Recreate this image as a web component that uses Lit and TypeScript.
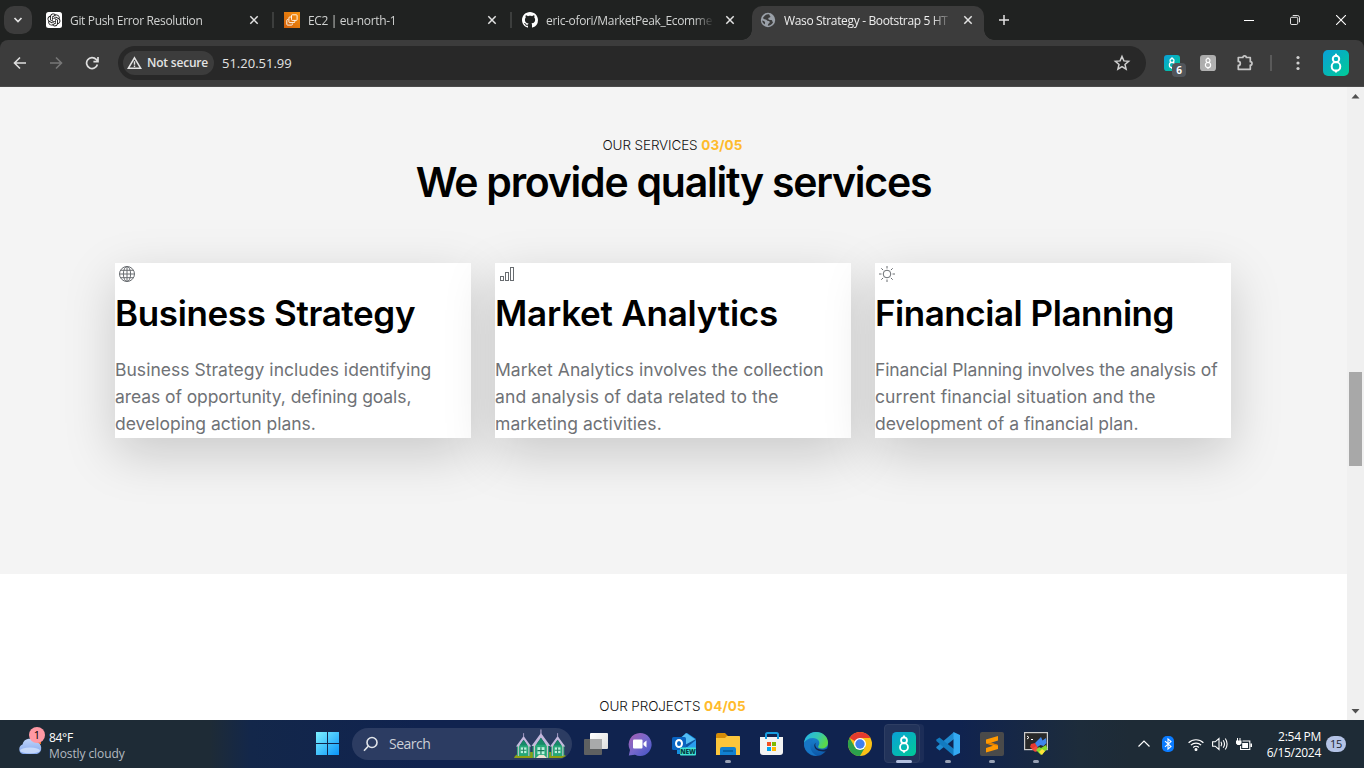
import { LitElement, html, css, svg } from "lit";
import { customElement } from "lit/decorators.js";
import { styleMap } from "lit/directives/style-map.js";

const eight = (stroke: number) => svg`
  <g fill="none" stroke="#fff" stroke-width=${stroke} stroke-linecap="round">
    <path d="M13 4.400v1.600M13 20.600v1.200"/><circle cx="13" cy="9" r="3.200"/><circle cx="13" cy="16.400" r="4.300"/>
  </g>`;

const eightTile = (size: number, id: string, gray = false, stroke = 2) => html`
  <svg width=${size} height=${size} viewBox="0 0 26 26">
    <defs><linearGradient id=${id} x1="0" y1="0" x2="1" y2="1">
      <stop offset="0" stop-color=${gray ? "#a9a9a9" : "#0a9fd8"}/><stop offset="1" stop-color=${gray ? "#b5b5b5" : "#00cc96"}/>
    </linearGradient></defs>
    <rect width="26" height="26" rx="5" fill="url(#${id})"/>${eight(stroke)}
  </svg>`;

const openai = html`<svg width="16" height="16" viewBox="0 0 16 16"><rect width="16" height="16" rx="2.5" fill="#fff"/>
  <path transform="translate(1.5 1.5) scale(.54)" fill="#111" d="M22.2819 9.8211a5.9847 5.9847 0 0 0-.5157-4.9108 6.0462 6.0462 0 0 0-6.5098-2.9A6.0651 6.0651 0 0 0 4.9807 4.1818a5.9847 5.9847 0 0 0-3.9977 2.9 6.0462 6.0462 0 0 0 .7427 7.0966 5.98 5.98 0 0 0 .511 4.9107 6.051 6.051 0 0 0 6.5146 2.9001A5.9847 5.9847 0 0 0 13.2599 24a6.0557 6.0557 0 0 0 5.7718-4.2058 5.9894 5.9894 0 0 0 3.9977-2.9001 6.0557 6.0557 0 0 0-.7475-7.0729zm-9.022 12.6081a4.4755 4.4755 0 0 1-2.8764-1.0408l.1419-.0804 4.7783-2.7582a.7948.7948 0 0 0 .3927-.6813v-6.7369l2.02 1.1686a.071.071 0 0 1 .038.052v5.5826a4.504 4.504 0 0 1-4.4945 4.4944zm-9.6607-4.1254a4.4708 4.4708 0 0 1-.5346-3.0137l.142.0852 4.783 2.7582a.7712.7712 0 0 0 .7806 0l5.8428-3.3685v2.3324a.0804.0804 0 0 1-.0332.0615L9.74 19.9502a4.4992 4.4992 0 0 1-6.1408-1.6464zM2.3408 7.8956a4.485 4.485 0 0 1 2.3655-1.9728V11.6a.7664.7664 0 0 0 .3879.6765l5.8144 3.3543-2.0201 1.1685a.0757.0757 0 0 1-.071 0l-4.8303-2.7865A4.504 4.504 0 0 1 2.3408 7.872zm16.5963 3.8558L13.1038 8.364 15.1192 7.2a.0757.0757 0 0 1 .071 0l4.8303 2.7913a4.4944 4.4944 0 0 1-.6765 8.1042v-5.6772a.79.79 0 0 0-.407-.667zm2.0107-3.0231l-.142-.0852-4.7735-2.7818a.7759.7759 0 0 0-.7854 0L9.409 9.2297V6.8974a.0662.0662 0 0 1 .0284-.0615l4.8303-2.7866a4.4992 4.4992 0 0 1 6.6802 4.66zM8.3065 12.863l-2.02-1.1638a.0804.0804 0 0 1-.038-.0567V6.0742a4.4992 4.4992 0 0 1 7.3757-3.4537l-.142.0805L8.704 5.459a.7948.7948 0 0 0-.3927.6813zm1.0976-2.3654l2.602-1.4998 2.6069 1.4998v2.9994l-2.5974 1.4997-2.6067-1.4997Z"/></svg>`;

const ec2 = html`<svg width="16" height="16" viewBox="0 0 16 16"><defs><linearGradient id="aws" x1="0" y1="1" x2="1" y2="0"><stop offset="0" stop-color="#d0600c"/><stop offset="1" stop-color="#f8930f"/></linearGradient></defs>
  <rect width="16" height="16" fill="url(#aws)"/><g fill="none" stroke="#fff" stroke-width=".9"><path d="M4.200 7.500H3.600a.8.800 0 0 0-.8.800v4a.8.800 0 0 0 .8.800h4a.8.800 0 0 0 .8-.8v-.8"/><rect x="7.500" y="2.800" width="5.600" height="5.600" rx=".8"/><path d="M7.500 5H5.700a.8.800 0 0 0-.8.800v4a.8.800 0 0 0 .8.800h4.300a.8.800 0 0 0 .8-.8V8.400"/></g></svg>`;

const github = html`<svg width="16" height="16" viewBox="0 0 16 16"><path fill="#fff" d="M8 0C3.58 0 0 3.58 0 8c0 3.54 2.29 6.53 5.47 7.59.4.07.55-.17.55-.38 0-.19-.01-.82-.01-1.49-2.01.37-2.53-.49-2.69-.94-.09-.23-.48-.94-.82-1.13-.28-.15-.68-.52-.01-.53.63-.01 1.08.58 1.23.82.72 1.21 1.87.87 2.33.66.07-.52.28-.87.51-1.07-1.78-.2-3.64-.89-3.64-3.95 0-.87.31-1.59.82-2.15-.08-.2-.36-1.02.08-2.12 0 0 .67-.21 2.2.82.64-.18 1.32-.27 2-.27s1.36.09 2 .27c1.53-1.04 2.2-.82 2.2-.82.44 1.1.16 1.92.08 2.12.51.56.82 1.27.82 2.15 0 3.07-1.87 3.75-3.65 3.95.29.25.54.73.54 1.48 0 1.07-.01 1.93-.01 2.2 0 .21.15.46.55.38A8.01 8.01 0 0 0 16 8c0-4.42-3.58-8-8-8z"/></svg>`;

const earth = html`<svg width="16" height="16" viewBox="0 0 16 16"><circle cx="8" cy="8" r="7.2" fill="#9aa0a8"/>
  <path fill="#3c3c3c" d="M9.2 2.2c-1.6-.2-3 .2-4.200 1.200L3 5.800c.3 1.400 1.200 1.600 2.600 1.700 1.300.1 1.300 1.500 2.600 1.500 1.200 0 1.700.5 1.500 1.500-.2.900-1.200.8-1.500 1.600-.2.500-.2 1.100-.4 1.600 2 .1 4.200-1.200 5.200-3.200-.8-.6-.5-1.800-1.400-2.400-.9-.5-2 .2-2.900-.5-.8-.6-.4-1.900.7-2 .9-.1 1.200-.7.900-1.300-.3-.5-.9-.9-1.100-2.100z"/><path fill="#3c3c3c" d="M2.200 8.600c1 .5 2.500.6 2.800 1.600.3 1-.3 1.400-.2 2.400-1.400-.8-2.500-2.300-2.600-4z"/></svg>`;

const closeX = html`<svg width="12" height="12" viewBox="0 0 12 12"><path d="M2.300 2.300l7.400 7.400M9.700 2.300L2.300 9.700" stroke="#e3e3e3" stroke-width="1.500"/></svg>`;

interface Tab { title: string; icon: unknown; active?: boolean; sep?: boolean; }
const TABS: Tab[] = [
  { title: "Git Push Error Resolution", icon: openai, sep: true },
  { title: "EC2 | eu-north-1", icon: ec2, sep: true },
  { title: "eric-ofori/MarketPeak_Ecomme", icon: github },
  { title: "Waso Strategy - Bootstrap 5 HT", icon: earth, active: true },
];

@customElement("browser-chrome")
export class BrowserChrome extends LitElement {
  static styles = css`
    :host { display: block; font: 12px/16px "Open Sans", "Noto Sans", sans-serif; color: #e3e3e3; background: #202221; }
    svg { display: block; flex: none; }
    .strip { display: flex; height: 40px; }
    .drop { width: 28px; height: 28px; margin: 6px 6px 0 4px; border-radius: 10px; background: #3c3c3c; display: grid; place-items: center; }
    .tab { width: 238px; height: 34px; margin-top: 6px; display: flex; align-items: center; box-sizing: border-box; padding-left: 8px; padding-bottom: 6px; color: #d0d2d1; }
    .tab.active { width: 232px; background: #3c3c3c; border-radius: 10px 10px 0 0; color: #eee; position: relative; }
    .tab.active::before, .tab.active::after { content: ""; position: absolute; bottom: 0; width: 10px; height: 10px; }
    .tab.active::before { left: -10px; background: radial-gradient(circle at 0 0, transparent 9.500px, #3c3c3c 10px); }
    .tab.active::after { right: -10px; background: radial-gradient(circle at 100% 0, transparent 9.500px, #3c3c3c 10px); }
    .title { width: 170px; margin: 0 8px 0 8px; padding-top: 2px; white-space: nowrap; letter-spacing: -.34px; mask-image: linear-gradient(90deg, #000 148px, transparent 168px); }
    .sep { width: 2px; height: 16px; margin-left: 12px; background: #3c3e3d; }
    .plus { width: 40px; display: grid; place-items: center; }
    .win { margin-left: auto; display: flex; }
    .win span { width: 46px; display: grid; place-items: center; }
    .bar { height: 46px; background: #3c3c3c; border-bottom: 1px solid #4a4a4a; border-radius: 8px 8px 0 0; display: flex; align-items: center; }
    .nav { width: 36px; display: grid; place-items: center; }
    .nav.first { width: 40px; margin-right: -2px; }
    .omni { width: 1028px; height: 34px; margin-left: 8px; border-radius: 17px; background: #282828; display: flex; align-items: center; box-sizing: border-box; padding: 0 15px 0 5px; }
    .chip { width: 91px; height: 24px; border-radius: 12px; background: #3c3c3c; display: flex; align-items: center; gap: 5px; padding-left: 4px; box-sizing: border-box; font-weight: 600; letter-spacing: -.2px; white-space: nowrap; }
    .url { margin-left: 8px; font-size: 13px; letter-spacing: 0; }
    .star { margin-left: auto; }
    .tools { display: flex; align-items: center; flex: 1; padding-left: 18px; }
    .ext { position: relative; width: 16px; margin-right: 20px; }
    .count { position: absolute; left: 8px; top: 8px; width: 14px; height: 14px; border-radius: 4px; background: #51555a; color: #fff; font: 700 10px/14px "Open Sans", sans-serif; text-align: center; }
    .rule { width: 2px; height: 16px; background: #5a5a5a; margin: 0 17px 0 16px; }
    .dots { margin-right: 14px; }
  `;
  render() {
    return html`
      <div class="strip">
        <div class="drop"><svg width="12" height="12" viewBox="0 0 12 12"><path d="M2.500 4l3.500 3.500L9.500 4" fill="none" stroke="#e3e3e3" stroke-width="1.700"/></svg></div>
        ${TABS.map(t => html`<div class="tab ${t.active ? "active" : ""}">${t.icon}<div class="title">${t.title}</div>${closeX}${t.sep ? html`<div class="sep"></div>` : ""}</div>`)}
        <div class="plus"><svg width="12" height="12" viewBox="0 0 12 12"><path d="M6 1v10M1 6h10" stroke="#e3e3e3" stroke-width="1.500"/></svg></div>
        <div class="win">
          <span><svg width="10" height="10"><path d="M0 5.500h10" stroke="#fff"/></svg></span>
          <span><svg width="10" height="10" viewBox="0 0 11 11" fill="none" stroke="#fff"><rect x=".5" y="2.500" width="8" height="8" rx="1.500"/><path d="M3 .5h5a2.500 2.500 0 0 1 2.500 2.500v5"/></svg></span>
          <span><svg width="10" height="10"><path d="M0 0l10 10M10 0L0 10" stroke="#fff" stroke-width="1.100"/></svg></span>
        </div>
      </div>
      <div class="bar">
        <div class="nav first"><svg width="14" height="14" viewBox="0 0 14 14" fill="none" stroke="#dedede" stroke-width="1.600"><path d="M13 7H1.800M7 1.500L1.500 7 7 12.500"/></svg></div>
        <div class="nav"><svg width="14" height="14" viewBox="0 0 14 14" fill="none" stroke="#777" stroke-width="1.600"><path d="M1 7h11.200M7 1.500L12.500 7 7 12.500"/></svg></div>
        <div class="nav"><svg width="14" height="14" viewBox="0 0 14 14" fill="none" stroke="#dedede" stroke-width="1.700"><path d="M12.400 8.500A5.500 5.500 0 1 1 11.200 3.400L12.800 5M13 1v4.600H8.400"/></svg></div>
        <div class="omni">
          <div class="chip"><svg width="15" height="14" viewBox="0 0 15 14"><path d="M7.500 1.800L13.700 12.300H1.300z" fill="none" stroke="#e3e3e3" stroke-width="1.500"/><path d="M7.500 5.200v3.500M7.500 9.600v1.400" stroke="#e3e3e3" stroke-width="1.400"/></svg>Not secure</div>
          <div class="url">51.20.51.99</div>
          <svg class="star" width="18" height="18" viewBox="0 0 18 18"><path d="M9 2.500l1.900 4.400 4.700.4-3.600 3.100 1.100 4.700L9 12.600l-4.100 2.500L6 10.400 2.400 7.300l4.700-.4z" fill="none" stroke="#d0d0d0" stroke-width="1.500"/></svg>
        </div>
        <div class="tools">
          <div class="ext">${eightTile(16, "ea", false, 2)}<div class="count">6</div></div>
          <div class="ext">${eightTile(16, "eb", true, 1.800)}</div>
          <svg width="18" height="18" viewBox="0 0 18 18"><path d="M2.300 3.500h4.600a1.700 1.700 0 0 1 3.400 0h4v4.200a1.700 1.700 0 0 1 0 3.400v4.200h-12v-3.900a2 2 0 0 0 0-4z" fill="none" stroke="#c7c7c7" stroke-width="1.700" stroke-linejoin="round"/></svg>
          <div class="rule"></div>
          <svg class="dots" width="20" height="16" viewBox="0 0 20 16" fill="#d0d0d0"><circle cx="9" cy="2.500" r="1.600"/><circle cx="9" cy="8" r="1.600"/><circle cx="9" cy="13.500" r="1.600"/></svg>
          ${eightTile(26, "ec", false, 2)}
        </div>
      </div>`;
  }
}

const globe = svg`<circle cx="8" cy="8" r="7.500"/><ellipse cx="8" cy="8" rx="3.600" ry="7.500"/><path d="M8 .5v15M.5 8h15M1.800 4.300h12.400M1.800 11.700h12.400"/>`;
const chart = svg`<rect x="1.500" y="10.500" width="3" height="4"/><rect x="6.500" y="6.500" width="3" height="8"/><rect x="11.500" y="1.500" width="3" height="13"/>`;
const sun = svg`<circle cx="8" cy="8" r="3.800"/><path d="M8 0v2.500M8 13.500V16M0 8h2.500M13.500 8H16M2.300 2.300l1.800 1.800M11.900 11.900l1.800 1.800M2.300 13.700l1.800-1.800M11.900 4.100l1.800-1.800"/>`;

interface Card { icon: unknown; title: string; titleSpacing: string; lines: [string, string][]; }
const CARDS: Card[] = [
  { icon: globe, title: "Business Strategy", titleSpacing: "-.36px", lines: [["Business Strategy includes identifying", ".03px"], ["areas of opportunity, defining goals,", "-.08px"], ["developing action plans.", "0"]] },
  { icon: chart, title: "Market Analytics", titleSpacing: "-.22px", lines: [["Market Analytics involves the collection", ".04px"], ["and analysis of data related to the", ".11px"], ["marketing activities.", ".05px"]] },
  { icon: sun, title: "Financial Planning", titleSpacing: "-.47px", lines: [["Financial Planning involves the analysis of", "-.1px"], ["current financial situation and the", ".12px"], ["development of a financial plan.", "0"]] },
];

@customElement("site-page")
export class SitePage extends LitElement {
  static styles = css`
    :host { display: flex; overflow: hidden; background: #fff; font-family: Inter, "Open Sans", sans-serif; color: #000; }
    .doc { width: 1347px; }
    .services { height: 487px; box-sizing: border-box; padding: 47px 115px 0; background: #f4f4f4; }
    .label { margin: 0; padding-right: 2px; font-size: 13.500px; line-height: 23px; font-weight: 300; letter-spacing: -.12px; text-align: center; color: #111; }
    .label b { color: #ffbb2c; font-weight: 700; letter-spacing: .1px; }
    h2 { margin: 0 0 56px; font-size: 41px; line-height: 50px; font-weight: 600; letter-spacing: -1.240px; text-align: center; }
    .cards { display: grid; grid-template-columns: repeat(3, 356px); gap: 24px; }
    .card { background: #fff; height: 175px; box-shadow: 0 16px 48px rgba(0, 0, 0, .175); }
    .icon { display: block; padding: 3px 0 10px 4px; }
    h3 { margin: 0 0 21px; font-size: 35px; line-height: 43px; font-weight: 600; white-space: nowrap; }
    .line { display: block; font-size: 17.500px; line-height: 27px; color: #6f7276; white-space: nowrap; }
    .projects { padding-top: 121px; }
    .scroll { width: 17px; background: #f0f0f0; display: flex; flex-direction: column; align-items: center; }
    .thumb { flex: none; width: 13px; height: 94px; margin: 268px 0 237px; background: #a8a8a8; }
    .scroll svg { display: block; flex: none; }
  `;
  render() {
    return html`
      <div class="doc">
        <section class="services">
          <p class="label">OUR SERVICES <b>03/05</b></p>
          <h2>We provide quality services</h2>
          <div class="cards">${CARDS.map(c => html`
            <article class="card">
              <svg class="icon" width="16" height="16" viewBox="0 0 16 16" fill="none" stroke="#686c70">${c.icon}</svg>
              <h3 style=${styleMap({ letterSpacing: c.titleSpacing })}>${c.title}</h3>
              ${c.lines.map(([t, s]) => html`<span class="line" style=${styleMap({ letterSpacing: s })}>${t}</span>`)}
            </article>`)}
          </div>
        </section>
        <section class="projects"><p class="label">OUR PROJECTS <b>04/05</b></p></section>
      </div>
      <div class="scroll">
        <svg width="17" height="17"><path d="M4.500 11.500h8l-4-4.500z" fill="#505050"/></svg>
        <div class="thumb"></div>
        <svg width="17" height="17"><path d="M4.500 6h8l-4 4.500z" fill="#505050"/></svg>
      </div>`;
  }
}

const house = (x: number, y: number, s: number) => svg`<g transform="translate(${x} ${y}) scale(${s})">
  <path d="M1 9h14v12H1z" fill="#26a878"/><path d="M8 0L0 11h3l5-7 5 7h3z" fill="#c4b8dd"/><path d="M8 4L4 10h8z" fill="#178a68"/><path d="M8-3v4" stroke="#aaa0c8"/><path d="M5 12h6v6H5z" fill="#b9f2dc"/><path d="M8 12v6M5 15h6" stroke="#187c5b"/><path d="M2.500 10v11M13.500 10v11" stroke="#d3c0cc"/></g>`;

const APPS: { icon: unknown; mark?: "dot" | "active" }[] = [
  { icon: svg`<defs><linearGradient id="tv" x1="0" y1="0" x2="1" y2="1"><stop offset="0" stop-color="#fff"/><stop offset="1" stop-color="#ddd"/></linearGradient></defs><rect x="6" y="1" width="18" height="16" rx="1" fill="url(#tv)"/><rect x="0" y="7" width="18" height="16" rx="1" fill="#5e6061"/><path d="M6 7h12v10H6z" fill="#a9aaab"/>` },
  { icon: svg`<defs><linearGradient id="ch" x1="0" y1="0" x2="1" y2="1"><stop offset="0" stop-color="#a65cb0"/><stop offset=".5" stop-color="#7668cc"/><stop offset="1" stop-color="#4052c4"/></linearGradient></defs><path d="M12 1a11.500 11.500 0 1 1-5 21.800L.8 23.600 2 18A11.500 11.500 0 0 1 12 1z" fill="url(#ch)"/><rect x="5" y="7.500" width="9.500" height="9" rx="1" fill="#fff"/><path d="M15.500 11l3-2.500v7l-3-2.500z" fill="#fff"/>` },
  { icon: svg`<path d="M5 8l10-7 9 6v13l-3 2H5z" fill="#1490df"/><path d="M14 1l10 7-10 9-9-7z" fill="#54bdf5"/><path d="M24 7v12L11 14z" fill="#0d55a3"/><path d="M24 8L9 20h12l3-3z" fill="#2a9df0"/><rect x="0" y="5" width="14" height="13" rx="1.500" fill="#0a64c2"/><ellipse cx="7" cy="11.500" rx="3" ry="3.500" fill="none" stroke="#fff" stroke-width="2"/><rect x="8" y="15.500" width="16" height="8" rx="1" fill="#3fe3d4"/><text x="16" y="22.300" text-anchor="middle" font-family="Open Sans" font-size="6.500" font-weight="800" fill="#073b43">NEW</text>` },
  { mark: "dot", icon: svg`<path d="M0 3a2 2 0 0 1 2-2h7l3 3h10a2 2 0 0 1 2 2v6H0z" fill="#d58c08"/><path d="M0 6h9l2-2h12a1 1 0 0 1 1 1v18H0z" fill="#fcc63c"/><path d="M4 23v-6a2 2 0 0 1 2-2h12a2 2 0 0 1 2 2v6z" fill="#1180d0"/><path d="M7 18h10v2H7z" fill="#0862a3"/>` },
  { icon: svg`<path d="M6 8V2.500A1.500 1.500 0 0 1 7.500 1h9A1.500 1.500 0 0 1 18 2.500V8" fill="none" stroke="#159ce0" stroke-width="2"/><path d="M0 5h23v15a3 3 0 0 1-3 3H3a3 3 0 0 1-3-3z" fill="#f3f3f3"/><path d="M5 5h2v2H5zM17 5h2v2h-2z" fill="#159ce0"/><path d="M7 10h4v4H7z" fill="#f25022"/><path d="M12 10h4v4h-4z" fill="#7fba00"/><path d="M7 15h4v4H7z" fill="#00a4ef"/><path d="M12 15h4v4h-4z" fill="#ffb900"/>` },
  { icon: svg`<defs><linearGradient id="e1" x1="0" y1="0" x2="1" y2=".4"><stop offset=".1" stop-color="#25b5e4"/><stop offset=".6" stop-color="#35c7b1"/><stop offset="1" stop-color="#5ad84b"/></linearGradient><linearGradient id="e2" x1="0" y1="0" x2="0" y2="1"><stop offset="0" stop-color="#1c8fd8"/><stop offset="1" stop-color="#0d57a8"/></linearGradient></defs><circle cx="12" cy="12" r="12" fill="url(#e2)"/><path d="M0 11C1 4 6 0 12 0c7 0 12 5 12 10.500 0 4-3 6-6.500 6-3 0-4-1.500-3-2.800C17 10 14 6 9 6 4.500 6 1.500 8 0 11z" fill="url(#e1)"/><path d="M9 7.500c-4 4-4 12.500 4 16.300C5 24 0 18 0 11.500 2 8.500 5 7 9 7.500z" fill="#1776c6"/><path d="M12.200 10.800c-1.700 1.400-1.200 4.800 2.300 6.300 3 1.300 6.500.7 8.500-.6.500.8-.2 2-1 2.700-5 1-11.500-.700-11.700-5.400 0-1.500.8-2.700 1.900-3z" fill="#10254f"/>` },
  { icon: svg`<circle cx="12" cy="12" r="12" fill="#fbc116"/><path d="M12 12L1.600 6A12 12 0 0 1 22.400 6H12z" fill="#e33b2e"/><path d="M1.600 6A12 12 0 0 0 12 24l5.200-9L12 12 6.800 15z" fill="#2ba24c"/><circle cx="12" cy="12" r="6" fill="#fff"/><circle cx="12" cy="12" r="4.700" fill="#3f7fee"/>` },
  { mark: "active", icon: eightTile(24, "ed", false, 2) },
  { mark: "dot", icon: svg`<path d="M18 0v7L3.500 18.500.3 16V15z" fill="#1f8ad0"/><path d="M.3 9v-1.500L3.500 5.500 18 17v7z" fill="#127bc0"/><path d="M17.500 0L24 3v18l-6.500 3z" fill="#33a9f2"/>` },
  { mark: "dot", icon: svg`<rect width="24" height="24" rx="2" fill="#4a4a4a"/><path d="M18 4v4.500l-7 2.200 7 2.300v4L6 20.500V16l7-2.200-7-2.300V7.500z" fill="#ff9800"/><path d="M6 11.500l5-.8 7 2.300v.8z" fill="#d97a00"/>` },
  { mark: "dot", icon: svg`<rect x=".6" y=".6" width="22.800" height="17" fill="#292929" stroke="#ccc" stroke-width="1.200"/><path d="M3 4l2 1.500L3 7M7 7.500h2" stroke="#fff" fill="none"/><path d="M6 15l1-3 4-1 3 3-3 6-5-5z" fill="#e8392f"/><path d="M11 11l6-6 1.500 3.500L22 6l.5 5-3 3-3-1-3 2z" fill="#3f86ec"/><path d="M8 17l4-3 3 3-3 3z" fill="#f04c3e"/><path d="M12 18l3-3 2 1 5-3 1.500 4-6.500 6z" fill="#86d92c"/><path d="M15 20l3-3 3 2-3 4z" fill="#ffe23a"/>` },
];

@customElement("task-bar")
export class TaskBar extends LitElement {
  static styles = css`
    :host { display: flex; height: 48px; color: #fff; font: 12px/16px "Open Sans", "Noto Sans", sans-serif;
      background: linear-gradient(90deg, #1e2b36 0, #1e2b36 210px, #13274a 250px, #10234f 420px, #10234f 960px, #1d2c3b 1080px, #1e2b36 1130px); }
    svg { display: block; overflow: visible; }
    .weather { width: 287px; padding: 9px 0 0 18px; display: flex; gap: 5px; }
    .cloud { position: relative; width: 26px; padding-top: 8px; }
    .alert { position: absolute; left: 11px; top: -2px; width: 16px; height: 16px; border-radius: 50%; background: #ff99a4; color: #000; font-size: 11px; text-align: center; }
    .now { padding-top: 1px; }
    .temp { letter-spacing: -.3px; }
    .muted { color: #b4bac0; letter-spacing: -.1px; }
    .start { width: 47px; padding: 12px 0 0 11px; box-sizing: border-box; }
    .search { width: 220px; height: 32px; margin: 8px 2px 0 0; border-radius: 16px; background: #2c3c62; display: flex; align-items: center; box-sizing: border-box; padding-left: 11px; font-size: 14px; color: #ccd0d8; letter-spacing: -.5px; gap: 10px; }
    .town { margin-left: auto; margin-right: 2px; }
    .app { width: 44px; height: 48px; display: flex; flex-direction: column; align-items: center; }
    .app.active { position: relative; }
    .app.active::before { content: ""; position: absolute; left: 2px; top: 4px; width: 36px; height: 39px; border-radius: 4px; background: #22335a; border: 1px solid #2e3e63; box-sizing: border-box; box-shadow: 4px 0 0 #1c2d57; }
    .app svg { margin-top: 12px; position: relative; }
    .dot { width: 6px; height: 3px; margin-top: 4px; border-radius: 2px; background: #98a1b4; }
    .dot.wide { width: 16px; background: #b3c0e0; position: relative; }
    .tray { margin-left: auto; display: flex; align-items: center; }
    .cell { width: 24px; display: grid; place-items: center; }
    .gap { margin-right: 4px; }
    .clock { width: 65px; padding-top: 1px; text-align: right; letter-spacing: -.28px; white-space: nowrap; }
    .badge { width: 20px; height: 16px; margin: 0 18px 0 5px; border-radius: 8px; background: #b4c3e6; color: #1b2430; font-size: 11px; letter-spacing: -.3px; text-align: center; }
  `;
  render() {
    return html`
      <div class="weather">
        <div class="cloud"><svg width="25" height="18" viewBox="0 0 25 18"><defs><linearGradient id="cl" x1="0" y1="0" x2="0" y2="1"><stop offset="0" stop-color="#bfd4fa"/><stop offset="1" stop-color="#84a8ee"/></linearGradient></defs><path d="M15 0h8v7h-8z" fill="#f0701c"/><path d="M5 17a5 5 0 0 1-.5-9.500A7.500 7.500 0 0 1 18 5a6.200 6.200 0 0 1 1 12z" fill="url(#cl)"/><ellipse cx="12" cy="13.500" rx="10" ry="3" fill="#dce8fd" opacity=".7"/></svg><div class="alert">1</div></div>
        <div class="now"><div class="temp">84°F</div><div class="muted">Mostly cloudy</div></div>
      </div>
      <div class="start"><svg width="23" height="23" viewBox="0 0 23 23"><defs><linearGradient id="wn" gradientUnits="userSpaceOnUse" x1="0" y1="0" x2="23" y2="23"><stop offset="0" stop-color="#7df0ff"/><stop offset="1" stop-color="#0a94fa"/></linearGradient></defs><path d="M0 0h11v11H0zM12 0h11v11H12zM0 12h11v11H0zM12 12h11v11H12z" fill="url(#wn)"/></svg></div>
      <div class="search">
        <svg width="16" height="16" viewBox="0 0 16 16" fill="none" stroke="#e2e5ea" stroke-width="1.600"><circle cx="9" cy="6.500" r="5"/><path d="M5.200 10.200L1 14.700"/></svg>Search
        <svg class="town" width="57" height="28" viewBox="0 0 57 28"><path d="M2 26l5-4h40l6 4-4 2H1z" fill="#8f9e12"/>${house(3, 6, .95)}${house(37, 6, .95)}${house(18.500, 3, 1.180)}<path d="M23 28l3-3h5l3 3z" fill="#eee2d0"/></svg>
      </div>
      ${APPS.map(a => html`<div class="app ${a.mark === "active" ? "active" : ""}"><svg width="24" height="24" viewBox="0 0 24 24">${a.icon}</svg>${a.mark ? html`<div class="dot ${a.mark === "active" ? "wide" : ""}"></div>` : ""}</div>`)}
      <div class="tray">
        <div class="cell"><svg width="12" height="8" viewBox="0 0 12 8"><path d="M.5 6.500L6 1l5.500 5.500" fill="none" stroke="#fff" stroke-width="1.200"/></svg></div>
        <div class="cell gap"><svg width="12" height="16" viewBox="0 0 12 16"><rect width="12" height="16" rx="5" fill="#0a7bff"/><path d="M3 5.200l6 5.400L6 13V3l3 2.400-6 5.400" fill="none" stroke="#fff" stroke-width="1.100"/></svg></div>
        <div class="cell"><svg width="16" height="13" viewBox="0 0 16 13" fill="none" stroke="#fff" stroke-width="1.200"><path d="M.6 4.800a10.500 10.500 0 0 1 14.800 0M2.900 7.200a7.200 7.200 0 0 1 10.200 0M5.200 9.500a4 4 0 0 1 5.600 0"/><circle cx="8" cy="11.500" r=".9" fill="#fff"/></svg></div>
        <div class="cell"><svg width="16" height="14" viewBox="0 0 16 14" fill="none" stroke="#fff" stroke-width="1.100"><path d="M.6 4.800h2.600L7 1.500v11L3.200 9.200H.6zM9 4.800q1.500 2.200 0 4.400M11.200 3.200q2.600 3.800 0 7.600M13.300 1.500q3.600 5.500 0 11"/></svg></div>
        <div class="cell"><svg width="16" height="13" viewBox="0 0 16 13"><path d="M6.500 3h7.300v8.500H4.600V8" fill="none" stroke="#fff" stroke-width="1.100"/><path d="M6.200 5H12v5H6.200zM14.400 5.500H16V9h-1.600zM0 2.500h5.500v3L4 7H1.500L0 5.500zM1 0h1v3H1zM3.500 0h1v3h-1z" fill="#fff"/></svg></div>
        <div class="clock">2:54 PM<br>6/15/2024</div>
        <div class="badge">15</div>
      </div>`;
  }
}

@customElement("app-root")
export class AppRoot extends LitElement {
  static styles = css`
    :host { display: grid; grid-template-rows: 87px 633px 48px; width: 1364px; height: 768px; overflow: hidden; }
  `;
  render() {
    return html`<browser-chrome></browser-chrome><site-page></site-page><task-bar></task-bar>`;
  }
}
